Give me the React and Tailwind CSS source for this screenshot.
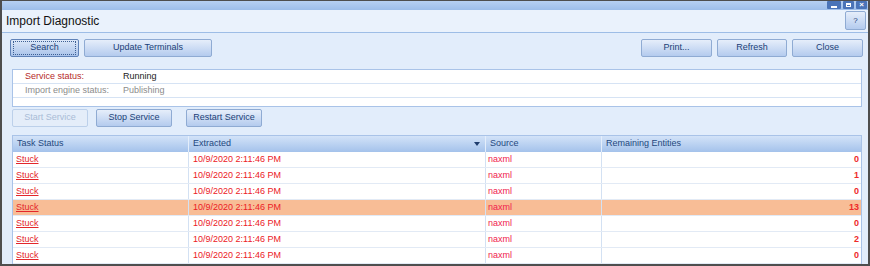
import React from 'react';

const rows = [
  { count: 0 },
  { count: 1 },
  { count: 0 },
  { count: 13, selected: true },
  { count: 0 },
  { count: 2 },
  { count: 0 },
];

function Btn({ children, className = '', focused = false, disabled = false }) {
  return (
    <div
      className={`flex h-[18px] items-center justify-center rounded-[2px] border text-[9px] ${
        disabled
          ? 'border-[#bcd0ea] bg-[#e4edf9] text-[#a9bcd7]'
          : focused
          ? 'border-[#5f82b8] bg-gradient-to-b from-[#dde8f8] to-[#a9c3ea] text-[#1b3f77]'
          : 'border-[#8fabd3] bg-gradient-to-b from-[#e6eefa] to-[#b4cbee] text-[#1b3f77]'
      } ${className}`}
    >
      {focused ? (
        <span className="flex h-[14px] w-[calc(100%-4px)] items-center justify-center border border-dotted border-[#3d5f93]">
          {children}
        </span>
      ) : (
        children
      )}
    </div>
  );
}

export default function App() {
  return (
    <div
      className="flex h-[266px] w-[870px] flex-col border-x-2 border-t border-b-2 border-[#4e4e4e] bg-[#e2edfb]"
      style={{ fontFamily: '"Liberation Sans", Arial, sans-serif' }}
    >
      {/* title strip */}
      <div className="flex h-[9px] items-start justify-end gap-[2px] bg-gradient-to-b from-[#b6d0f2] to-[#9dbeea] pr-[1px]">
        <div className="flex h-[8px] w-[14px] items-end justify-center rounded-[1px] bg-[#4a74b8] pb-[1px]">
          <div className="h-[2px] w-[6px] bg-white" />
        </div>
        <div className="flex h-[8px] w-[11px] items-center justify-center rounded-[1px] bg-[#4a74b8]">
          <div className="h-[4px] w-[5px] border border-t-2 border-white" />
        </div>
        <div className="flex h-[8px] w-[11px] items-center justify-center rounded-[1px] bg-[#4a74b8] text-[8px] leading-none font-bold text-white">
          ×
        </div>
      </div>

      {/* header */}
      <div className="flex h-[24px] items-center justify-between border-b border-[#9dbde6] bg-[#eaf2fc] pr-[2px] pl-[4px]">
        <span className="text-[12px] text-[#111]">Import Diagnostic</span>
        <div className="flex h-[19px] w-[21px] items-center justify-center rounded-[2px] border border-[#8fabd3] bg-gradient-to-b from-[#e6eefa] to-[#b4cbee] text-[8px] text-[#1b3f77]">
          ?
        </div>
      </div>

      {/* body */}
      <div className="flex flex-1 flex-col">
        <div className="mt-[6px] flex items-center justify-between pr-[5px] pl-[8px]">
          <div className="flex gap-[5px]">
            <Btn focused className="w-[69px]">Search</Btn>
            <Btn className="w-[128px]">Update Terminals</Btn>
          </div>
          <div className="flex gap-[5px]">
            <Btn className="w-[71px]">Print...</Btn>
            <Btn className="w-[70px]">Refresh</Btn>
            <Btn className="w-[71px]">Close</Btn>
          </div>
        </div>

        <div className="mt-[12px] mr-[6px] ml-[10px] border border-[#a9c3e8] bg-white text-[9px]">
          <div className="flex h-[14px] items-center border-b border-[#d6e3f4]">
            <span className="w-[110px] pl-[12px] text-[#b52a2a]">Service status:</span>
            <span className="text-[#222]">Running</span>
          </div>
          <div className="flex h-[14px] items-center border-b border-[#d6e3f4]">
            <span className="w-[110px] pl-[12px] text-[#8c8c8c]">Import engine status:</span>
            <span className="text-[#8c8c8c]">Publishing</span>
          </div>
          <div className="h-[8px]" />
        </div>

        <div className="mt-[2px] flex pl-[10px]">
          <Btn disabled className="w-[76px]">Start Service</Btn>
          <Btn className="ml-[8px] w-[76px]">Stop Service</Btn>
          <Btn className="ml-[14px] w-[76px]">Restart Service</Btn>
        </div>

        <div className="mt-[8px] mr-[6px] ml-[10px] flex-1 border-x border-t border-[#a9c3e8] bg-white text-[9px]">
          <div className="grid h-[16px] grid-cols-[176px_297px_116px_1fr] bg-gradient-to-b from-[#d3e3f8] to-[#a4c2eb] text-[#24487e]">
            <div className="flex items-center border-r border-[#e4eefb] pl-[4px]">Task Status</div>
            <div className="flex items-center justify-between border-r border-[#e4eefb] pr-[5px] pl-[4px]">
              <span>Extracted</span>
              <span className="h-0 w-0 border-x-[3px] border-t-[4px] border-x-transparent border-t-[#1f3d6e]" />
            </div>
            <div className="flex items-center border-r border-[#e4eefb] pl-[4px]">Source</div>
            <div className="flex items-center pl-[4px]">Remaining Entities</div>
          </div>
          {rows.map((row, i) => (
            <div
              key={i}
              className={`grid h-[16px] grid-cols-[176px_297px_116px_1fr] border-b border-[#e2eaf5] ${
                row.selected ? 'bg-[#f8bd96]' : 'bg-white'
              }`}
            >
              <div className="flex items-center border-r border-[#d3e1f3] pl-[3px]">
                <span className="text-[#e3262b] underline">Stuck</span>
              </div>
              <div className="flex items-center border-r border-[#d3e1f3] pl-[4px] text-[#ec2026]">
                10/9/2020 2:11:46 PM
              </div>
              <div className="flex items-center border-r border-[#d3e1f3] pl-[2px] text-[#f0224e]">naxml</div>
              <div className="flex items-center justify-end pr-[2px] font-bold text-[#ee2a2a]">{row.count}</div>
            </div>
          ))}
        </div>
      </div>
    </div>
  );
}
